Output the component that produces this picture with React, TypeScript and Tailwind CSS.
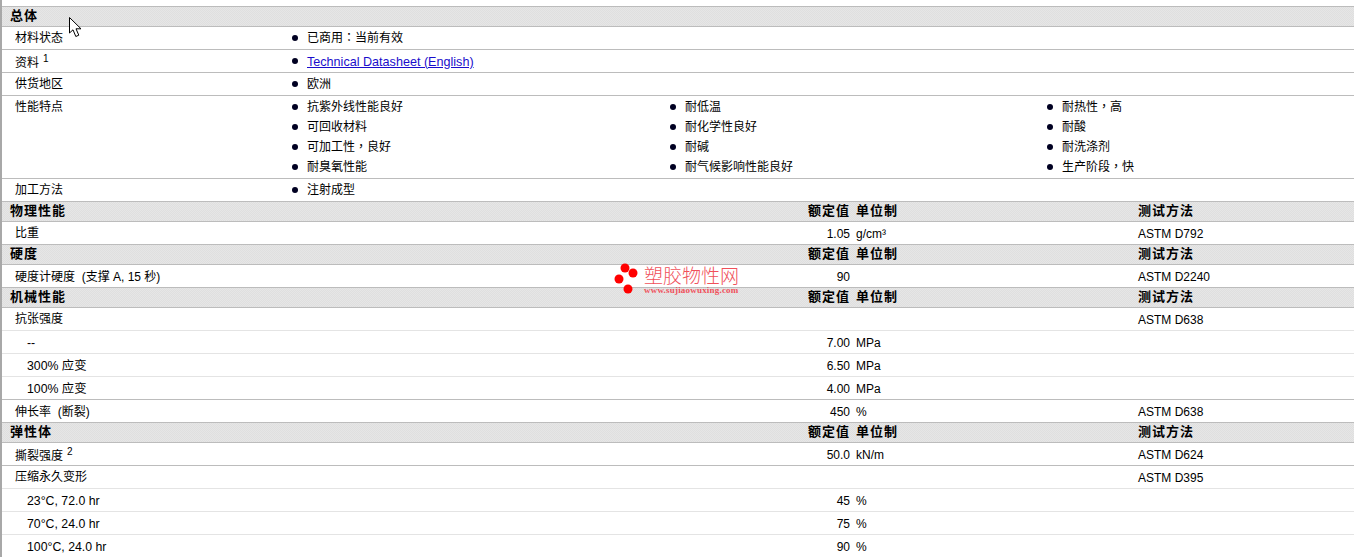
const overviewRows = [
  { label: '材料状态', items: ['已商用：当前有效'] },
  { label: '资料', note: '1', link: 'Technical Datasheet (English)' },
  { label: '供货地区', items: ['欧洲'] },
]

const features = [
  ['抗紫外线性能良好', '耐低温', '耐热性，高'],
  ['可回收材料', '耐化学性良好', '耐酸'],
  ['可加工性，良好', '耐碱', '耐洗涤剂'],
  ['耐臭氧性能', '耐气候影响性能良好', '生产阶段，快'],
]

type DataRow = {
  label: string
  note?: string
  value?: string
  unit?: string
  method?: string
  sub?: boolean
  light?: boolean
  low?: boolean
}

const sections: { title: string; rows: DataRow[] }[] = [
  { title: '物理性能', rows: [{ label: '比重', value: '1.05', unit: 'g/cm³', method: 'ASTM D792' }] },
  { title: '硬度', rows: [{ label: '硬度计硬度\u00a0\u00a0(支撑 A, 15 秒)', value: '90', method: 'ASTM D2240', low: true }] },
  {
    title: '机械性能',
    rows: [
      { label: '抗张强度', method: 'ASTM D638', light: true },
      { label: '--', value: '7.00', unit: 'MPa', sub: true, light: true },
      { label: '300% 应变', value: '6.50', unit: 'MPa', sub: true, light: true },
      { label: '100% 应变', value: '4.00', unit: 'MPa', sub: true },
      { label: '伸长率\u00a0\u00a0(断裂)', value: '450', unit: '%', method: 'ASTM D638', low: true },
    ],
  },
  {
    title: '弹性体',
    rows: [
      { label: '撕裂强度', note: '2', value: '50.0', unit: 'kN/m', method: 'ASTM D624', low: true },
      { label: '压缩永久变形', method: 'ASTM D395', light: true },
      { label: '23°C, 72.0 hr', value: '45', unit: '%', sub: true, light: true },
      { label: '70°C, 24.0 hr', value: '75', unit: '%', sub: true, light: true },
      { label: '100°C, 24.0 hr', value: '90', unit: '%', sub: true },
    ],
  },
]

function Bullet({ text, href }: { text: string; href?: boolean }) {
  // the TC face centres the full-width colon and comma, as the picture does
  const centred = text.includes('，') || text.includes('：')
  return (
    <div className={`flex items-center h-5 ${centred ? "font-['Liberation_Sans','Noto_Sans_CJK_TC',sans-serif]" : ''}`}>
      <span className="w-[6px] h-[6px] rounded-full bg-[#000022] ml-[4px] mr-[9px]" />
      {href ? <a className="text-[#1a0dcc] underline text-[12.6px] mt-[2px]">{text}</a> : <span>{text}</span>}
    </div>
  )
}

function SectionHeader({ title, columns = true }: { title: string; columns?: boolean }) {
  return (
    <div className="grid grid-cols-[848px_288px_1fr] h-5 border-b border-[#bcbcbc] bg-[repeating-conic-gradient(#dfdfdf_0_25%,#e6e6e6_0_50%)] bg-[length:2px_2px] text-[13px] tracking-[1px] font-bold leading-[18px] text-black">
      <div className="flex justify-between pl-[8px]">
        <span>{title}</span>
        {columns && <span>额定值</span>}
      </div>
      <div className="pl-[6px]">{columns && '单位制'}</div>
      <div>{columns && '测试方法'}</div>
    </div>
  )
}

function Row({ row }: { row: DataRow }) {
  return (
    <div
      className={`grid grid-cols-[848px_288px_1fr] h-[23px] border-b ${row.light ? 'border-[#e4e4e4]' : 'border-[#bcbcbc]'}`}
    >
      <div className={`flex justify-between leading-[20px] ${row.sub ? 'pl-[25px]' : 'pl-[13px]'}`}>
        <span className={row.sub ? 'pt-[2px] text-[12.3px]' : row.note ? 'pt-[3px]' : row.low ? 'pt-[2px]' : 'pt-[1px]'}>
          {row.label}
          {row.note && <sup className="ml-[4px] text-[10px] leading-none">{row.note}</sup>}
        </span>
        <span className="pt-[2px]">{row.value}</span>
      </div>
      <div className="pl-[6px] pt-[2px] leading-[20px]">{row.unit}</div>
      <div className="pt-[2px] leading-[20px]">{row.method}</div>
    </div>
  )
}

export default function App() {
  return (
    <div className="relative w-[1354px] h-[557px] overflow-hidden bg-white text-[12px] text-black font-['Liberation_Sans','Noto_Sans_CJK_SC',sans-serif]">
      <div className="ml-[2px] pt-[6px]">
        <div className="border-t border-[#bcbcbc]">
          <SectionHeader title="总体" columns={false} />
        </div>

        {overviewRows.map((r) => (
          <div key={r.label} className="grid grid-cols-[286px_1fr] h-[23px] border-b border-[#bcbcbc]">
            <div className={`pl-[13px] leading-[20px] ${r.note ? 'pt-[3px]' : 'pt-[1px]'}`}>
              {r.label}
              {r.note && <sup className="ml-[4px] text-[10px] leading-none">{r.note}</sup>}
            </div>
            <div className="pt-[1px]">
              {r.link ? <Bullet text={r.link} href /> : <Bullet text={r.items![0]} />}
            </div>
          </div>
        ))}

        <div className="grid grid-cols-[286px_1fr] h-[83px] border-b border-[#bcbcbc]">
          <div className="pl-[13px] pt-[1px] leading-[20px]">性能特点</div>
          <div className="grid grid-cols-[378px_377px_1fr] content-start pt-[1px]">
            {features.flat().map((f) => (
              <Bullet key={f} text={f} />
            ))}
          </div>
        </div>

        <div className="grid grid-cols-[286px_1fr] h-[23px] border-b border-[#bcbcbc]">
          <div className="pl-[13px] pt-[1px] leading-[20px]">加工方法</div>
          <div className="pt-[1px]">
            <Bullet text="注射成型" />
          </div>
        </div>

        {sections.map((s) => (
          <div key={s.title}>
            <SectionHeader title={s.title} />
            {s.rows.map((r) => (
              <Row key={r.label} row={r} />
            ))}
          </div>
        ))}
      </div>

      {/* left rule of the page */}
      <div className="absolute left-0 top-0 w-[2px] h-full bg-[#a8a8a8]" />

      {/* watermark */}
      <div className="absolute left-[614px] top-[262px] flex">
        <svg width="28" height="32" viewBox="0 0 28 32" className="mr-[2px]">
          <circle cx="11" cy="6" r="4.5" fill="#f00" />
          <circle cx="19" cy="11" r="4.5" fill="#f00" />
          <circle cx="5" cy="17" r="4.5" fill="#f00" />
          <circle cx="14" cy="27" r="4.5" fill="#f00" />
        </svg>
        <div className="flex flex-col text-[#f0505a]">
          <span className="text-[19px] leading-[22px] mt-[2px] font-['Noto_Sans_CJK_SC',sans-serif] font-light">塑胶物性网</span>
          <span className="text-[9px] leading-[9px] tracking-[0.2px] font-['Liberation_Serif',serif] font-bold">www.sujiaowuxing.com</span>
        </div>
      </div>

      {/* mouse pointer */}
      <svg width="14" height="22" viewBox="0 0 14 22" className="absolute left-[69px] top-[17px]">
        <path d="M0.5 0.5 L0.5 16 L4 12.8 L6.8 19.5 L9.8 18.2 L7 11.8 L12 11.8 Z" fill="#fff" stroke="#000" strokeWidth="1" />
      </svg>
    </div>
  )
}
